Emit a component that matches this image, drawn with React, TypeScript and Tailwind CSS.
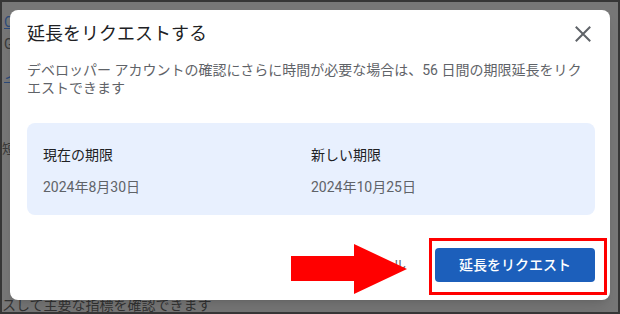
const font = { fontFamily: "Roboto, 'Noto Sans CJK JP', sans-serif" }

function CloseIcon() {
  return (
    <svg width={24} height={24} viewBox="0 0 24 24" fill="none">
      <path d="M5.5 5.5L18.5 18.5M18.5 5.5L5.5 18.5" stroke="#5f6368" strokeWidth={2} strokeLinecap="square" />
    </svg>
  )
}

export default function App() {
  return (
    <div
      className="relative w-[620px] h-[314px] overflow-hidden border-2 border-[#363636] bg-[#777777] pl-[8px] pt-[8px]"
      style={font}
    >
      {/* page behind the dimmed overlay */}
      <span className="absolute left-[2px] top-[11px] text-[14px] leading-[18px] text-[#2c4a7a] underline">C</span>
      <span className="absolute left-[2px] top-[33px] text-[14px] leading-[18px] text-[#3a3a3a]">G</span>
      <span className="absolute left-[2px] top-[65px] text-[14px] leading-[18px] text-[#2c4a7a] underline">ィ</span>
      <span className="absolute left-[0px] top-[138px] text-[13px] leading-[18px] text-[#3a3a3a]">短</span>
      <span className="absolute left-[0px] top-[294px] text-[14px] leading-[18px] text-[#333333]">スして主要な指標を確認できます</span>

      <div className="relative flex h-[290px] w-[600px] flex-col rounded-[8px] bg-white pl-[17px] pr-[15px] pb-[18px] pt-[12px] shadow-lg">
        <div className="flex h-[24px] items-center justify-between">
          <h3 className="text-[18px] leading-[24px] text-[#202124]">延長をリクエストする</h3>
          <CloseIcon />
        </div>
        <p className="mt-[15px] text-[14px] leading-[18px] text-[#5f6368]">
          デベロッパー アカウントの確認にさらに時間が必要な場合は、56 日間の期限延長をリクエストできます
        </p>
        <div className="mt-[26px] grid grid-cols-2 rounded-[8px] bg-[#e8f0fe] px-4 pb-[18px] pt-[22px] text-[14px] leading-[20px]">
          <div className="flex flex-col gap-[12px]">
            <span className="text-[#202124]">現在の期限</span>
            <span className="text-[#5f6368]">2024年8月30日</span>
          </div>
          <div className="flex flex-col gap-[12px]">
            <span className="text-[#202124]">新しい期限</span>
            <span className="text-[#5f6368]">2024年10月25日</span>
          </div>
        </div>
        <div className="mt-auto flex items-center justify-end gap-[13px]">
          <button className="h-[34px] px-4 text-[14px] text-[#5f6368]">キャンセル</button>
          <button className="h-[34px] w-[160px] rounded-[4px] bg-[#1c5fbb] text-[14px] font-medium text-white">
            延長をリクエスト
          </button>
        </div>
      </div>

      {/* annotation */}
      <svg className="absolute left-[289px] top-[240px]" width={118} height={54} viewBox="0 0 118 54">
        <polygon points="0,14 63,14 63,2 116,27 63,52 63,39 0,39" fill="#ff0000" />
      </svg>
      <div className="absolute left-[427px] top-[236px] h-[57px] w-[178px] border-[3px] border-[#ff0000]" />
    </div>
  )
}
